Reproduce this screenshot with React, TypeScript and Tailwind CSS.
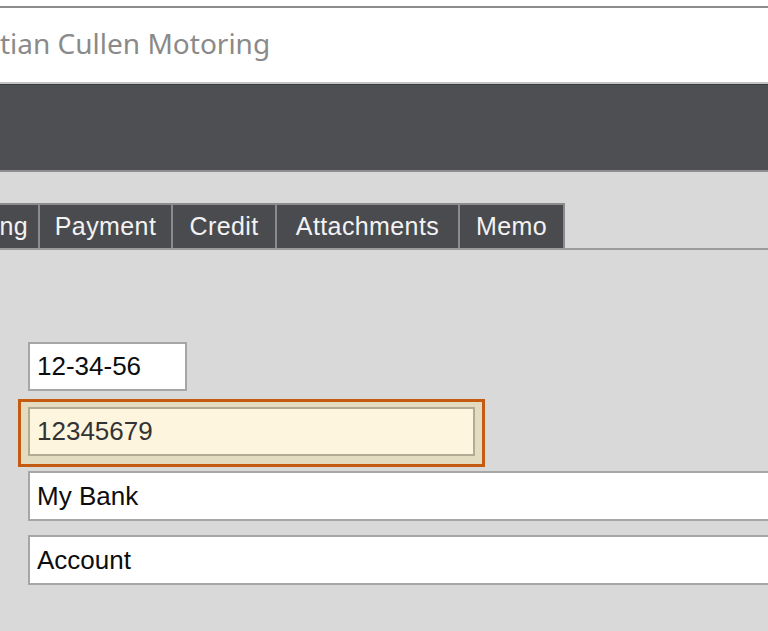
export default function App() {
  const tabs = [
    { label: "ng", w: "w-[40px]", first: true },
    { label: "Payment", w: "w-[133px]" },
    { label: "Credit", w: "w-[104px]" },
    { label: "Attachments", w: "w-[183px]" },
    { label: "Memo", w: "w-[105px]" },
  ];

  return (
    <div className="w-[768px] h-[631px] overflow-hidden bg-[#d9d9d9] flex flex-col font-['Liberation_Sans',Arial,sans-serif]">
      {/* window top edge */}
      <div className="h-[6px] bg-white shrink-0" />
      <div className="h-[2px] bg-[#8c8c8c] shrink-0" />

      {/* title */}
      <div className="h-[76px] shrink-0 bg-white border-b-2 border-[#c4c4c4] flex items-center">
        <span className="text-[28px] text-[#8a8a8a] font-['Noto_Sans','Open_Sans',sans-serif] -mt-[4px]">
          tian Cullen Motoring
        </span>
      </div>

      {/* dark toolbar */}
      <div className="h-[88px] shrink-0 bg-[#4e4f53] border-t border-[#3c3d40] border-b-2 border-b-[#8e8e8e]" />

      {/* tabs */}
      <div className="mt-[31px] flex items-stretch h-[47px] border-b-2 border-[#9a9a9a] shrink-0">
        {tabs.map((t) => (
          <div
            key={t.label}
            className={`${t.w} shrink-0 bg-[#4a4b4f] border-t-2 border-r-2 border-[#8c8c8c] flex items-center text-[25px] tracking-[0.4px] text-[#f2f2f2] ${
              t.first ? "justify-end pr-[10px]" : "justify-center"
            }`}
          >
            {t.label}
          </div>
        ))}
      </div>

      {/* fields */}
      <div className="pl-[28px] pt-[92px] flex flex-col text-[26px] text-[#0d0d0d]">
        <div className="w-[159px] h-[49px] bg-white border-2 border-[#a6a6a6] flex items-center pl-[7px]">
          12-34-56
        </div>

        <div className="-ml-[10px] mt-[8px] w-[467px] h-[68px] border-[3px] border-[#c55a11] bg-[#e3dcc0] p-[5px] pl-[7px]">
          <div className="h-[49px] w-[447px] bg-[#fdf5dd] border-2 border-[#b3ab93] flex items-center pl-[7px] text-[#333]">
            12345679
          </div>
        </div>

        <div className="mt-[4px] w-[760px] h-[50px] bg-white border-2 border-[#a6a6a6] border-r-0 flex items-center pl-[7px]">
          My Bank
        </div>

        <div className="mt-[14px] w-[760px] h-[50px] bg-white border-2 border-[#a6a6a6] border-r-0 flex items-center pl-[7px]">
          Account
        </div>
      </div>
    </div>
  );
}
